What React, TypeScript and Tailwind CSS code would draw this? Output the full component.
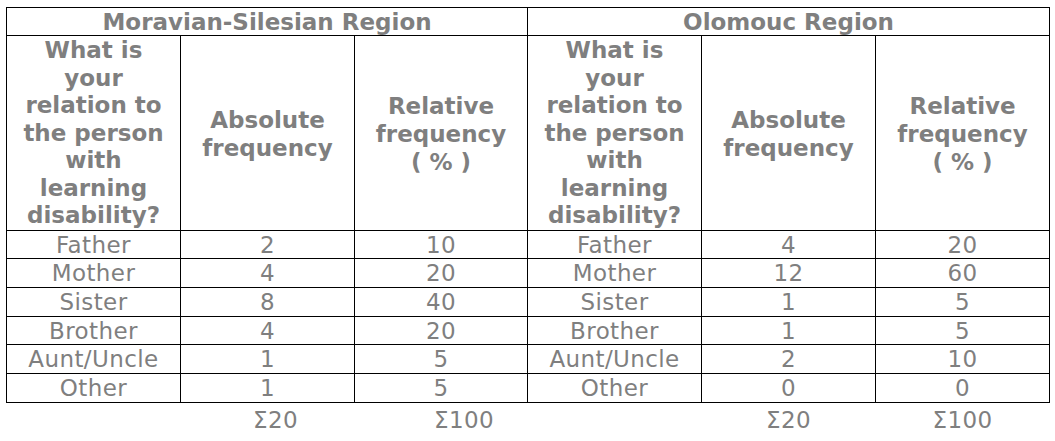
const rows = [
  ["Father", "2", "10", "Father", "4", "20"],
  ["Mother", "4", "20", "Mother", "12", "60"],
  ["Sister", "8", "40", "Sister", "1", "5"],
  ["Brother", "4", "20", "Brother", "1", "5"],
  ["Aunt/Uncle", "1", "5", "Aunt/Uncle", "2", "10"],
  ["Other", "1", "5", "Other", "0", "0"],
];

const cell = "border border-black text-center align-middle p-0";

function SubHeader() {
  return (
    <>
      <th className={`${cell} font-bold leading-[27.5px] pt-[1px]`}>
        What is
        <br />
        your
        <br />
        relation to
        <br />
        the person
        <br />
        with
        <br />
        learning
        <br />
        disability?
      </th>
      <th className={`${cell} font-bold leading-[28px] pt-[2px]`}>
        Absolute
        <br />
        frequency
      </th>
      <th className={`${cell} font-bold leading-[28px] pt-[2px]`}>
        Relative
        <br />
        frequency
        <br />( % )
      </th>
    </>
  );
}

export default function App() {
  return (
    <div className="min-h-screen bg-white pl-[6px] pt-[7px] font-['DejaVu_Sans',Verdana,sans-serif] text-[23px] text-[#7f7f7f]">
      <table className="table-fixed border-collapse w-[1044px]">
        <colgroup>
          <col className="w-[174px]" />
          <col className="w-[174px]" />
          <col className="w-[173px]" />
          <col className="w-[174px]" />
          <col className="w-[174px]" />
          <col className="w-[174px]" />
        </colgroup>
        <thead>
          <tr className="h-[28px]">
            <th colSpan={3} className={`${cell} font-bold leading-[26px] pt-[1px]`}>
              Moravian-Silesian Region
            </th>
            <th colSpan={3} className={`${cell} font-bold leading-[26px] pt-[1px]`}>
              Olomouc Region
            </th>
          </tr>
          <tr>
            <SubHeader />
            <SubHeader />
          </tr>
        </thead>
        <tbody>
          {rows.map((r, i) => (
            <tr key={i}>
              {r.map((v, j) => (
                <td key={j} className={`${cell} leading-[26.7px] pt-[1px] tracking-[0.4px]`}>
                  {v}
                </td>
              ))}
            </tr>
          ))}
          <tr className="tracking-[0.4px]">
            <td />
            <td className="text-center pt-[3px] pl-[16px] leading-[28px]">Σ20</td>
            <td className="text-center pt-[3px] pl-[46px] leading-[28px]">Σ100</td>
            <td />
            <td className="text-center pt-[3px] leading-[28px]">Σ20</td>
            <td className="text-center pt-[3px] leading-[28px]">Σ100</td>
          </tr>
        </tbody>
      </table>
    </div>
  );
}
